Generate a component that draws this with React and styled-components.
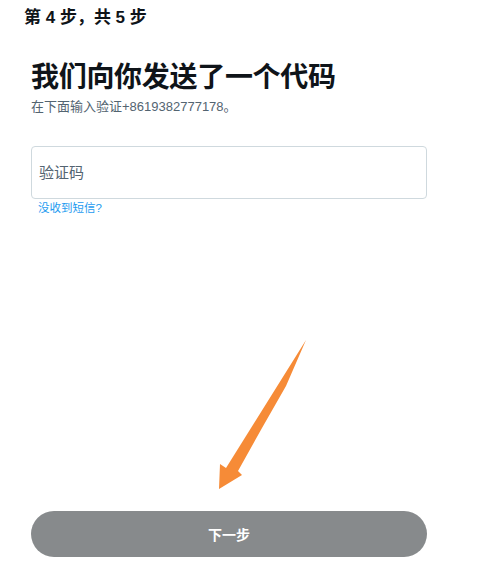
import React from "react";
import styled, { createGlobalStyle } from "styled-components";

const Global = createGlobalStyle`
  html, body { margin: 0; padding: 0; background: #ffffff; }
  body { font-family: "Liberation Sans", "Noto Sans CJK SC", sans-serif; }
  * { box-sizing: border-box; }
`;

const Page = styled.div`
  position: relative;
  height: 563px;
  width: 494px;
  display: flex;
  flex-direction: column;
  overflow: hidden;
`;

const StepHeader = styled.div`
  padding: 8px 0 0 24px;
  height: 36px;
  font-size: 17px;
  line-height: 20px;
  font-weight: 700;
  color: #0f1419;
`;

const Content = styled.div`
  padding: 0 67px 0 31px;
  display: flex;
  flex-direction: column;
  flex: 1;
`;

const Title = styled.h1`
  margin: 25px 0 0 0;
  font-size: 28px;
  line-height: 34px;
  font-weight: 700;
  color: #0f1419;
  letter-spacing: -0.3px;
`;

const Subtitle = styled.div`
  margin-top: 3px;
  font-size: 13px;
  line-height: 18px;
  color: #536471;
`;

const Field = styled.label`
  margin-top: 30px;
  height: 53px;
  border: 1px solid #cfd9de;
  border-radius: 4px;
  display: flex;
  align-items: center;
  padding: 0 7px;
`;

const Input = styled.input`
  border: none;
  outline: none;
  width: 100%;
  font-family: inherit;
  font-size: 15px;
  color: #0f1419;
  background: transparent;
  padding: 0;
  &::placeholder { color: #536471; }
`;

const Link = styled.a`
  display: block;
  margin-top: 1px;
  padding-left: 7px;
  font-size: 11.5px;
  line-height: 16px;
  color: #1d9bf0;
  text-decoration: none;
`;

const Spacer = styled.div`
  flex: 1;
`;

const NextButton = styled.button`
  height: 46px;
  margin-bottom: 6px;
  border: none;
  border-radius: 23px;
  background: #878a8c;
  color: #ffffff;
  font-family: inherit;
  font-size: 14px;
  font-weight: 700;
  cursor: pointer;
`;

const ArrowOverlay = styled.svg`
  position: absolute;
  left: 0;
  top: 0;
  pointer-events: none;
`;

export default function App() {
  return (
    <>
      <Global />
      <Page>
        <StepHeader>第 4 步，共 5 步</StepHeader>
        <Content>
          <Title>我们向你发送了一个代码</Title>
          <Subtitle>在下面输入验证+8619382777178。</Subtitle>
          <Field>
            <Input placeholder="验证码" />
          </Field>
          <Link href="#">没收到短信?</Link>
          <Spacer />
          <NextButton>下一步</NextButton>
        </Content>
        <ArrowOverlay width="494" height="563" viewBox="0 0 494 563">
          <polygon
            fill="#f68b37"
            points="306,340 286,386 262,428 238,471 242,475 219,489 220,464 226,468"
          />
        </ArrowOverlay>
      </Page>
    </>
  );
}
